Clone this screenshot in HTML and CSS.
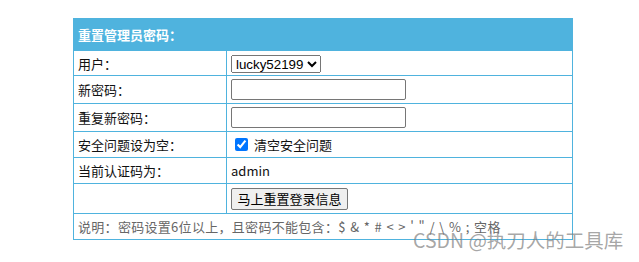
FILE: index.html
```html
<!DOCTYPE html>
<html lang="zh-CN">
<head>
    <meta charset="UTF-8">
    <meta name="viewport" content="width=device-width, initial-scale=1.0">
    <title>重置管理员密码</title>
    <link rel="stylesheet" href="styles.css">
</head>
<body>
    <div class="page">
        <form id="resetForm">
            <table class="reset-table">
                <tr class="row-head">
                    <th colspan="2">重置管理员密码：</th>
                </tr>
                <tr class="row-select">
                    <td class="label-cell">用户：</td>
                    <td>
                        <select name="user">
                            <option value="lucky52199">lucky52199</option>
                        </select>
                    </td>
                </tr>
                <tr class="row-input">
                    <td class="label-cell">新密码：</td>
                    <td><input type="password" name="pwd"></td>
                </tr>
                <tr class="row-input">
                    <td class="label-cell">重复新密码：</td>
                    <td><input type="password" name="pwd2"></td>
                </tr>
                <tr class="row-text">
                    <td class="label-cell">安全问题设为空：</td>
                    <td>
                        <label class="check"><input type="checkbox" name="clearq" checked>清空安全问题</label>
                    </td>
                </tr>
                <tr class="row-text">
                    <td class="label-cell">当前认证码为：</td>
                    <td>admin</td>
                </tr>
                <tr class="row-button">
                    <td class="label-cell"></td>
                    <td><button type="submit">马上重置登录信息</button></td>
                </tr>
                <tr class="row-text">
                    <td colspan="2" class="note">说明：密码设置6位以上，且密码不能包含：<span class="symbols">$ &amp; * # &lt; &gt; ' " / \ % ; 空格</span></td>
                </tr>
            </table>
        </form>
    </div>
    <div class="watermark">CSDN @执刀人的工具库</div>
</body>
</html>
```

FILE: styles.css
```css
body {
    margin: 0;
    background: #fff;
    font-family: "Noto Sans CJK SC", "Noto Sans", sans-serif;
    font-size: 13px;
    color: #111;
}

.page {
    padding: 18px 0 0 73px;
}

.reset-table {
    width: 500px;
    border-collapse: collapse;
    border: 1px solid #4fb3de;
}

.reset-table th,
.reset-table td {
    border: 1px solid #4fb3de;
    padding: 0 4px;
    text-align: left;
    vertical-align: middle;
}

.reset-table th {
    background-color: #4fb3de;
    color: #fff;
    font-weight: bold;
    height: 31px;
}

.label-cell {
    width: 144px;
}

.row-select td {
    height: 24px;
}

.row-input td {
    height: 27px;
}

.row-text td {
    height: 25px;
}

.row-button td {
    height: 29px;
}

select {
    font-family: "Liberation Sans", Arial, sans-serif;
    font-size: 13.33px;
    height: 18px;
    margin: 0;
    padding: 0;
}

input[type="password"] {
    width: 175px;
    height: 21px;
    box-sizing: border-box;
    margin: 0;
    border: 1px solid #767676;
    border-radius: 2px;
}

.check {
    display: flex;
    align-items: center;
}

.check input {
    width: 13px;
    height: 13px;
    margin: 0 6px 0 4px;
    accent-color: #0075ff;
}

button {
    font-family: "Noto Sans CJK SC", sans-serif;
    font-size: 13px;
    height: 22px;
    width: 117px;
    padding: 0;
    margin: 0;
    border: 1px solid #767676;
    border-radius: 2px;
    background-color: #efefef;
    color: #000;
}

.note {
    color: #666;
    letter-spacing: 0.3px;
}

.symbols {
    word-spacing: 1.2px;
}

.watermark {
    position: absolute;
    left: 413px;
    top: 225px;
    font-size: 19.5px;
    color: rgba(128, 128, 128, 0.7);
    font-family: "Noto Sans CJK SC", sans-serif;
}
```
